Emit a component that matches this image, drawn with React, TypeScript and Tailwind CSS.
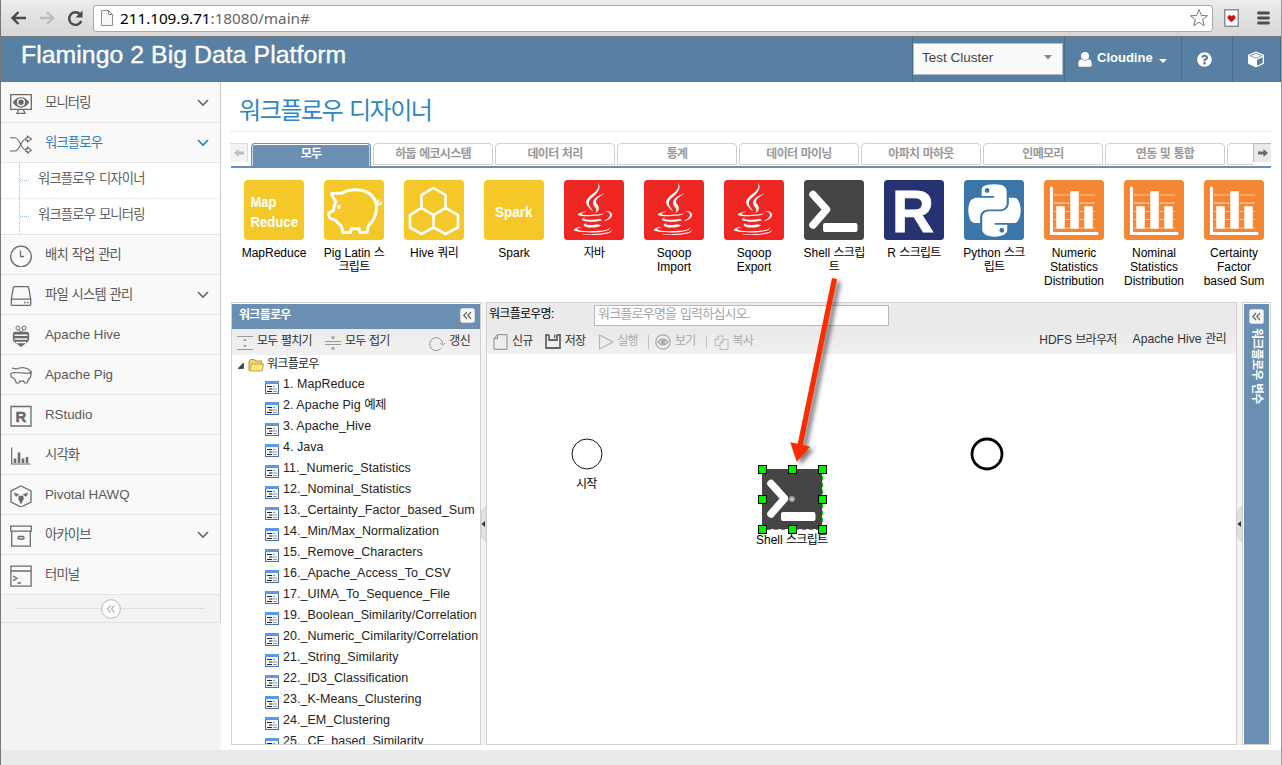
import React from "react";
import { FaJava, FaPython, FaQuestionCircle } from "react-icons/fa";

const HANGUL = /([\u3131-\uD79D]+)/;

function T({ children }: { children: string }) {
  return (
    <>
      {children.split(HANGUL).map((part, i) =>
        HANGUL.test(part) ? (
          <span key={i} className="tracking-[-0.06em]">
            {part}
          </span>
        ) : (
          <React.Fragment key={i}>{part}</React.Fragment>
        )
      )}
    </>
  );
}

/* ---------- Browser chrome ---------- */

function BrowserBar() {
  return (
    <div className="flex h-[37px] shrink-0 items-center border-b border-[#7d7d7d] bg-gradient-to-b from-[#ececec] to-[#d6d6d6] pl-[9px] pr-[11px]">
      <svg width="75" height="20" viewBox="0 0 75 20" fill="none" strokeWidth="2.4">
        <path d="M16 10H3M8.5 4L2.5 10l6 6" stroke="#4a4a4a" />
        <path d="M30 10h13M37 4l6 6-6 6" stroke="#bdbdbd" />
        <path d="M70 6.2A6.3 6.3 0 1 0 71.3 13" stroke="#4a4a4a" />
        <path d="M72.5 2.5v7h-7z" fill="#4a4a4a" />
      </svg>
      <div className="ml-[8px] flex h-[27px] flex-1 items-center rounded-[3px] border border-[#a9a9a9] bg-white pl-[7px] pr-[3px]">
        <svg width="12" height="16" viewBox="0 0 12 16" fill="#f6f6f6" stroke="#8c8c8c">
          <path d="M.5.5h7l4 4v11H.5zM7.5.5v4h4" />
        </svg>
        <div className="ml-[7px] flex-1 font-['Noto_Sans'] text-[15.3px] leading-5 tracking-[-0.04px] text-[#666]">
          <span className="text-black">211.109.9.71</span>:18080/main#
        </div>
        <svg width="20" height="20" viewBox="0 0 20 20" fill="#fff" stroke="#7a7a7a" strokeLinejoin="round">
          <path d="M10 1.5l2.3 6 6.2.2-4.9 3.9 1.7 6.2L10 14.3l-5.3 3.5 1.7-6.2L1.500 7.700l6.200-.2z" />
        </svg>
      </div>
      <svg className="ml-[11px]" width="15" height="18" viewBox="0 0 15 18">
        <rect x=".75" y=".75" width="13.500" height="16.500" fill="#fff" stroke="#8f8f8f" strokeWidth="1.5" />
        <path d="M7.500 13.200C5 11 3.500 9.800 3.500 8.200c0-2.200 3-2.700 4-.8 1-1.900 4-1.400 4 .8 0 1.600-1.500 2.800-4 5z" fill="#c21a10" />
      </svg>
      <svg className="ml-[18px]" width="13" height="14" viewBox="0 0 13 14" stroke="#4c4c4c" strokeWidth="2.800" strokeLinecap="round">
        <path d="M1.500 2h10M1.500 7h10M1.500 12h10" />
      </svg>
    </div>
  );
}

/* ---------- Application header ---------- */

function Header() {
  return (
    <header className="flex h-[45px] shrink-0 bg-[#5880a3] pl-5 text-white">
      <h1 className="mt-[2px] flex-1 text-[24.800px] leading-8 tracking-[0.05px] [-webkit-text-stroke:0.35px_white]">
        Flamingo 2 Big Data Platform
      </h1>
      <div className="flex">
        <div className="w-[152px] border-l border-[#446c8d] pt-[6px]">
          <div className="flex h-8 w-[150px] items-start justify-between border border-[#b5b8c8] bg-[#fafafa] pl-2 pr-2.5 text-[13.500px] leading-[27px] text-[#444]">
            Test Cluster
            <svg className="mt-[11px]" width="8" height="5" viewBox="0 0 8 5">
              <path d="M0 0h8L4 4.500z" fill="#8a8a8a" />
            </svg>
          </div>
        </div>
        <div className="flex w-[117px] items-center border-l border-[#446c8d] pl-[13px]">
          <svg width="14" height="15" viewBox="0 0 14 15" fill="#fff">
            <circle cx="7" cy="4" r="4" />
            <path d="M3.200 7.200C.8 8 .2 10 .2 12.500.2 14 1 14.800 2.500 14.800h9c1.500 0 2.300-.8 2.300-2.300 0-2.500-.6-4.500-3-5.300-2 1.800-5.600 1.800-7.600 0z" />
          </svg>
          <b className="ml-[5px] -mt-[3px] text-[13px] leading-5">Cloudine</b>
          <svg className="ml-1.5 mt-0.5" width="8" height="4" viewBox="0 0 8 4">
            <path d="M0 0h8L4 4z" fill="#fff" />
          </svg>
        </div>
        <div className="flex w-[51px] items-center justify-center border-l border-[#446c8d] pr-1.5">
          <FaQuestionCircle size={15} />
        </div>
        <div className="flex w-[49px] items-center justify-center border-x border-[#446c8d] pr-0.5">
          <svg width="18" height="17" viewBox="0 0 18 17">
            <path d="M9 .5l8 3.200v9L9 16.500l-8-3.800v-9z" fill="#fff" />
            <path d="M2.300 4.800L9 7.500l6.700-2.700L9 2z" fill="#5880a3" />
            <path d="M4 4.700l5 2 5-2-5-2z" fill="#fff" />
            <path d="M10 8.700l5.700-2.500v5.700L10 14.700z" fill="#5880a3" />
          </svg>
        </div>
      </div>
    </header>
  );
}

/* ---------- Sidebar ---------- */

const sideIcons: Record<string, React.ReactNode> = {
  monitor: (
    <>
      <path d="M.7 1.700h20.600v14.600H.7zM8.500 17l-1.500 3.300h8L13.500 17" />
      <path d="M3.500 9.500c4-6 11-6 15 0-4 6-11 6-15 0z" fill="#6b6b6b" />
      <circle cx="11" cy="9.300" r="3.400" stroke="#fff" fill="#6b6b6b" />
    </>
  ),
  flow: (
    <path d="M0 4.800h5c5 0 6 12.400 11 12.400M0 18h5c5 0 6-12 11-12M16 4.700h1.500V3l4 3-4 3V7.300H16zM16 15.900h1.500v-1.700l4 3-4 3v-1.700H16z" strokeWidth="1.100" />
  ),
  clock: (
    <>
      <circle cx="11" cy="11.500" r="10.300" />
      <path d="M10.500 5.500v6h3.500" />
    </>
  ),
  disk: (
    <>
      <path d="M4.500 1.700h13q1 0 1.200 1l2 11.500v5q0 1.200-1.200 1.200h-17q-1.200 0-1.200-1.200v-5l2-11.500q.2-1 1.200-1zM1.500 14.200h19" />
      <path d="M14 17.500h1.500M17 17.500h1.500" />
    </>
  ),
  bee: (
    <>
      <circle cx="8" cy="3" r="2" strokeWidth="1" />
      <circle cx="14" cy="3" r="2" strokeWidth="1" />
      <path d="M9 5l2 2.500L13 5" strokeWidth="1" />
      <path d="M5.500 7.500h11q2 0 2 2v4.500q0 2-2 3L11 21.200 5.500 17Q3.500 16 3.500 14V9.500q0-2 2-2z" fill="#6b6b6b" />
      <path d="M4.500 10.200h13M4.500 14h13M6 17.500h10" stroke="#f8f8f8" strokeWidth="1.500" />
    </>
  ),
  pig: (
    <path d="M2 3l4.500 1c4-1.800 8-2 11.500 0 1.800 1.200 2.700 2.700 3 4.300l.7-2M21 8.300c.3 3-1.300 5.500-3 6.700l-1 3h-2.500l-.8-1.800h-4L9 18H6.300l-1-3C4 14 3.500 12.300 1.200 11.800L.7 9 3 7.500z" strokeWidth="1.200" />
  ),
  r: (
    <>
      <path d="M1 1.500h20v19.500H1z" />
      <text x="5.500" y="16.500" fontSize="15" fontWeight="bold" fill="#6b6b6b" stroke="#6b6b6b" strokeWidth=".5">
        R
      </text>
    </>
  ),
  chart: (
    <>
      <path d="M1.700 2.500V19h18.800" strokeWidth="1.200" />
      <path d="M5 18v-4.500M9 18V7.500M13 18v-4.500M17 18v-6" strokeWidth="2.600" />
    </>
  ),
  hawk: (
    <>
      <path d="M11 1l10 5v11l-10 5-10-5V6z" />
      <path d="M4 8l5 1.500-3 2zM18 8l-5 1.500 3 2zM9 11h4l.5 3L11 19l-2.500-5z" fill="#6b6b6b" strokeWidth=".5" />
    </>
  ),
  archive: (
    <>
      <path d="M.7 1.200h20.600v5H.7zM1.700 6.200h18.600v15H1.700z" />
      <rect x="8" y="11.500" width="6" height="2.500" rx="1" />
    </>
  ),
  terminal: <path d="M.9 1.200h20.200v20H.9zM.9 6h20.200M3 11l4 2.300-4 2.300M7.500 18h3.500" />,
};

function Chevron({ blue }: { blue?: boolean }) {
  return (
    <svg width="12" height="8" viewBox="0 0 12 8" fill="none" stroke={blue ? "#2b7dbc" : "#666"} strokeWidth="1.600">
      <path d="M1 1l5 5 5-5" />
    </svg>
  );
}

function SideRow({ icon, label, arrow, active }: { icon: string; label: string; arrow?: boolean; active?: boolean }) {
  return (
    <div className="flex h-10 items-center border-b border-[#e5e5e5] bg-[#f9f9f9] pl-[9px] pr-[11px]">
      <svg className="mt-0.5 shrink-0" width="22" height="22" viewBox="0 0 22 22" fill="none" stroke="#6b6b6b" strokeWidth="1.300">
        {sideIcons[icon]}
      </svg>
      <span className={active ? "mt-px ml-[13px] flex-1 text-[13.300px] text-[#2b7dbc]" : "mt-px ml-[13px] flex-1 text-[13.300px] text-[#585858]"}>
        <T>{label}</T>
      </span>
      {arrow && <Chevron blue={active} />}
    </div>
  );
}

function SubRow({ label, last }: { label: string; last?: boolean }) {
  return (
    <div className={last ? "flex h-9 items-stretch border-b border-[#e5e5e5] bg-white" : "flex h-9 items-stretch border-b border-dotted border-[#dcdcdc] bg-white"}>
      <div className="ml-[18px] flex w-2.5 items-center border-l border-dotted border-[#9dbdd6]">
        <div className="w-full border-t border-dotted border-[#9dbdd6]" />
      </div>
      <span className="ml-[9px] text-[13.300px] leading-[31px] text-[#616161]">
        <T>{label}</T>
      </span>
    </div>
  );
}

function Sidebar() {
  return (
    <aside className="w-[220px] shrink-0 bg-[#f3f3f3]">
      <div className="border-r border-[#ccc]">
        <div className="pt-px">
          <SideRow icon="monitor" label="모니터링" arrow />
        </div>
        <SideRow icon="flow" label="워크플로우" arrow active />
        <SubRow label="워크플로우 디자이너" />
        <SubRow label="워크플로우 모니터링" last />
        <SideRow icon="clock" label="배치 작업 관리" />
        <SideRow icon="disk" label="파일 시스템 관리" arrow />
        <SideRow icon="bee" label="Apache Hive" />
        <SideRow icon="pig" label="Apache Pig" />
        <SideRow icon="r" label="RStudio" />
        <SideRow icon="chart" label="시각화" />
        <SideRow icon="hawk" label="Pivotal HAWQ" />
        <SideRow icon="archive" label="아카이브" arrow />
        <SideRow icon="terminal" label="터미널" />
        <div className="flex h-7 items-center border-b border-[#e0e0e0] px-[15px]">
          <div className="h-px flex-1 bg-[#e0e0e0]" />
          <svg width="20" height="20" viewBox="0 0 20 20" fill="#fff" stroke="#b5b5b5">
            <circle cx="10" cy="10" r="9.300" />
            <path d="M9.500 6.500L6.500 10l3 3.500M13.500 6.500l-3 3.500 3 3.500" fill="none" strokeWidth="1.200" />
          </svg>
          <div className="h-px flex-1 bg-[#e0e0e0]" />
        </div>
      </div>
    </aside>
  );
}

/* ---------- Tabs ---------- */

const tabs = ["모두", "하둡 에코시스템", "데이터 처리", "통계", "데이터 마이닝", "아파치 마하웃", "인메모리", "연동 및 통합"];

function Tabs() {
  return (
    <div className="flex h-[25px] border-b-2 border-[#6a8fb3]">
      <div className="-ml-px flex h-[19px] w-[18px] items-center justify-center border-r border-t border-[#ddd] bg-[#f4f4f4]">
        <svg width="10" height="8" viewBox="0 0 10 8" fill="#bcbcbc">
          <path d="M0 4l4.500-4v2.500H10v3H4.500V8z" />
        </svg>
      </div>
      <div className="flex flex-1 gap-0.5 overflow-hidden pl-[3px]">
        {tabs.map((t, i) => (
          <div
            key={t}
            className={
              i === 0
                ? "h-[23px] w-[120px] shrink-0 rounded-t border border-b-0 border-[#6a8fb3] bg-[#6a8fb3] text-center text-[12px] font-bold leading-[20px] text-white shadow-[inset_0_1px_0_#fff,inset_1px_0_0_#c8d6e4,inset_-1px_0_0_#c8d6e4]"
                : "h-[22px] w-[120px] shrink-0 rounded-t border border-[#cfcfcf] bg-white text-center text-[12px] font-bold leading-[20px] text-[#999]"
            }
          >
            <T>{t}</T>
          </div>
        ))}
        <div className="h-[22px] w-[30px] shrink-0 rounded-tl border border-[#cfcfcf] bg-white" />
      </div>
      <div className="flex h-[19px] w-[18px] items-center justify-center border-l border-t border-[#bbb] bg-[#eaeaea]">
        <svg width="10" height="8" viewBox="0 0 10 8" fill="#6c6c6c">
          <path d="M10 4L5.500 0v2.500H0v3h5.500V8z" />
        </svg>
      </div>
    </div>
  );
}

/* ---------- Palette ---------- */

function ShellGlyph() {
  return (
    <g stroke="#fff" fill="none" strokeLinecap="round" strokeLinejoin="round">
      <path d="M9 14.500L22.500 29.500 9 45" strokeWidth="7.500" />
      <rect x="21" y="45" width="30.500" height="5" strokeWidth="4" fill="#fff" />
    </g>
  );
}

function BarsGlyph() {
  return (
    <g>
      <path d="M10 15h41M10 23.200h41M10 31.500h41M10 39.500h41M10 48h41" stroke="#fbc79d" strokeWidth="1.200" />
      <path d="M7.500 8v45.500H53" stroke="#fff" strokeWidth="3.200" fill="none" strokeLinecap="round" strokeLinejoin="round" />
      <path d="M12 26h9v23h-9zM26 11h9v38h-9zM40 26h9v23h-9z" fill="#fff" stroke="#f58634" strokeWidth=".5" />
    </g>
  );
}

function HiveGlyph() {
  return (
    <path
      d="M29.500 8l12 7v13l-12 7-12-7V15zM17.500 28l12 7v12.500l-12 6.500L6 47.500V35zM41.500 28L54 35v12.500L41.500 54l-12-6.500V35z"
      fill="none"
      stroke="#fff"
      strokeWidth="2.600"
    />
  );
}

function PigGlyph() {
  return (
    <g fill="none" stroke="#fff" strokeWidth="3" strokeLinejoin="round" strokeLinecap="round">
      <path d="M7.500 13.500L18 13c6-3.500 17-4.500 23.500-1.500C48 14 52.500 20 52.500 27c0 8-3.500 14.500-8 18.500l-1.500 7h-7l-.8-3.700h-7.700l-1.200 3.700h-7.500L17.500 46C14 44 13 40.500 9.500 39.500 5.500 39 4 36 5 33l4.500-2.500c0-4 1.500-6.500 2.500-9C10.500 19 8 17 7.500 13.500z" />
      <path d="M52.500 23.500c2.500 1.500 4.500 1 4.800-1M54.500 24.500c-2-2-1-4 .2-4" strokeWidth="1.800" />
      <circle cx="15" cy="27" r=".7" strokeWidth="2.500" />
    </g>
  );
}

function tileText(lines: [string, number, number, number][]) {
  return (
    <g fill="#fff" fontWeight="bold" fontSize="15.500">
      {lines.map(([s, x, y, w]) => (
        <text key={s} x={x} y={y} textLength={w} lengthAdjust="spacingAndGlyphs">
          {s}
        </text>
      ))}
    </g>
  );
}

const yellow = "text-[#f4c829]";
const red = "text-[#ee2624]";
const orange = "text-[#f58634]";

const javaGlyph = <FaJava x={3} y={3} size={52} color="#fff" />;

const palette: { tint: string; glyph: React.ReactNode; lines: string[] }[] = [
  { tint: yellow, glyph: tileText([["Map", 6.500, 26.500, 26], ["Reduce", 6.500, 47, 47.500]]), lines: ["MapReduce"] },
  { tint: yellow, glyph: <PigGlyph />, lines: ["Pig Latin 스", "크립트"] },
  { tint: yellow, glyph: <HiveGlyph />, lines: ["Hive 쿼리"] },
  { tint: yellow, glyph: tileText([["Spark", 11, 36.500, 37.500]]), lines: ["Spark"] },
  { tint: red, glyph: javaGlyph, lines: ["자바"] },
  { tint: red, glyph: javaGlyph, lines: ["Sqoop", "Import"] },
  { tint: red, glyph: javaGlyph, lines: ["Sqoop", "Export"] },
  { tint: "text-[#454545]", glyph: <ShellGlyph />, lines: ["Shell 스크립", "트"] },
  {
    tint: "text-[#263272]",
    glyph: (
      <text x="8" y="52" fontSize="60" fontWeight="bold" fill="#fff" stroke="#fff" textLength="42" lengthAdjust="spacingAndGlyphs">
        R
      </text>
    ),
    lines: ["R 스크립트"],
  },
  { tint: "text-[#3a76a8]", glyph: <FaPython x={0.5} y={0.5} size={60} color="#fff" />, lines: ["Python 스크", "립트"] },
  { tint: orange, glyph: <BarsGlyph />, lines: ["Numeric", "Statistics", "Distribution"] },
  { tint: orange, glyph: <BarsGlyph />, lines: ["Nominal", "Statistics", "Distribution"] },
  { tint: orange, glyph: <BarsGlyph />, lines: ["Certainty", "Factor", "based Sum"] },
];

function Palette() {
  return (
    <div className="flex h-[134px] pl-[3px] pt-3">
      {palette.map((p, i) => (
        <div key={i} className="flex w-20 shrink-0 flex-col items-center">
          <svg width="60" height="60" viewBox="0 0 60 60" className={p.tint}>
            <rect width="60" height="60" rx="3.500" fill="currentColor" />
            {p.glyph}
          </svg>
          <div className="mt-1.5 whitespace-nowrap text-center text-[12px] leading-[14px] text-black">
            {p.lines.map((l) => (
              <div key={l} className="h-3.5">
                <T>{l}</T>
              </div>
            ))}
          </div>
        </div>
      ))}
    </div>
  );
}

/* ---------- Workflow tree ---------- */

const workflows = [
  "1. MapReduce",
  "2. Apache Pig 예제",
  "3. Apache_Hive",
  "4. Java",
  "11._Numeric_Statistics",
  "12._Nominal_Statistics",
  "13._Certainty_Factor_based_Sum",
  "14._Min/Max_Normalization",
  "15._Remove_Characters",
  "16._Apache_Access_To_CSV",
  "17._UIMA_To_Sequence_File",
  "19._Boolean_Similarity/Correlation",
  "20._Numeric_Cimilarity/Correlation",
  "21._String_Similarity",
  "22._ID3_Classification",
  "23._K-Means_Clustering",
  "24._EM_Clustering",
  "25._CF_based_Similarity",
];

function CollapseButton() {
  return (
    <svg className="shrink-0" width="15" height="15" viewBox="0 0 15 15">
      <rect x=".5" y=".5" width="14" height="14" rx="2" fill="#f7f7f7" stroke="#d8d8d8" />
      <path d="M7 4L3.800 7.500 7 11M11 4L7.800 7.500 11 11" fill="none" stroke="#666" strokeWidth="1.200" />
    </svg>
  );
}

function TreePanel() {
  return (
    <div className="flex w-[250px] shrink-0 flex-col border border-[#d0d0d0] bg-white">
      <div className="mt-px flex h-[25px] shrink-0 items-center justify-between bg-[#6a8fb3] pl-[7px] pr-[5px] text-white">
        <b className="-mt-[3px] text-[12px]">
          <T>워크플로우</T>
        </b>
        <span className="-mt-0.5">
          <CollapseButton />
        </span>
      </div>
      <div className="flex h-[26px] shrink-0 items-center bg-gradient-to-b from-[#ebebeb] to-[#f1f1f1] pl-[5px] pr-2.5 text-[12px] text-[#333]">
        <svg className="mt-0.5" width="16" height="14" viewBox="0 0 16 14" fill="none" stroke="#999">
          <path d="M0 .5h16M0 13.500h16" />
          <path d="M8 2.500l2 2.500H6zM8 11.500L6 9h4z" fill="#999" stroke="none" />
        </svg>
        <span className="-mt-0.5 ml-1">
          <T>모두 펼치기</T>
        </span>
        <svg className="ml-[13px] mt-0.5" width="16" height="14" viewBox="0 0 16 14" fill="none" stroke="#999">
          <path d="M0 5.500h16M0 8.500h16" />
          <path d="M8 4L6 .500h4zM8 10l2 3.500H6z" fill="#999" stroke="none" />
        </svg>
        <span className="-mt-0.5 ml-1 flex-1">
          <T>모두 접기</T>
        </span>
        <svg className="mt-0.5" width="17" height="15" viewBox="0 0 17 15" fill="none" stroke="#999">
          <path d="M12.200 12.300A6.500 6.500 0 1 1 13.700 8M11.200 7l2.500 2.800L16.200 7" />
        </svg>
        <span className="-mt-0.5 ml-[3px]">
          <T>갱신</T>
        </span>
      </div>
      <div className="min-h-0 flex-1 overflow-hidden whitespace-nowrap text-[12.500px] leading-[18px] text-[#222]">
        <div className="flex h-[21px]">
          <svg className="ml-1.5 mt-2" width="6" height="6" viewBox="0 0 6 6">
            <path d="M5.500 0v5.500H0z" fill="#444" stroke="#222" strokeWidth=".6" />
          </svg>
          <svg className="ml-1 mt-[3px]" width="16" height="14" viewBox="0 0 16 14" strokeLinejoin="round">
            <path d="M1 12.500V3l1.500-1.500h4L8 3h5.500v9.500z" fill="#f2d26a" stroke="#b8942f" />
            <path d="M1.500 13L3.500 6h12l-1.500 7z" fill="#ffe680" stroke="#c9a23a" />
          </svg>
          <span className="ml-[3px] text-[12px]">
            <T>워크플로우</T>
          </span>
        </div>
        {workflows.map((w) => (
          <div key={w} className="flex h-[21px] pl-[33px]">
            <svg className="mt-[5px] shrink-0" width="14" height="13" viewBox="0 0 14 13">
              <rect x=".5" y=".5" width="13" height="12" fill="#f4f8ff" stroke="#4a6fa8" />
              <path d="M0 0h14v3H0z" fill="#5b97ea" />
              <path d="M2 5.500h5M4 8h3M2 10.500h5" stroke="#222" />
              <path d="M8 5.500h2M7 8h5M8 10.500h4" stroke="#999" />
            </svg>
            <span className="-mt-px ml-[4px] tracking-[0.04px]">
              <T>{w}</T>
            </span>
          </div>
        ))}
      </div>
    </div>
  );
}

function Splitter() {
  return (
    <div className="flex w-[5px] shrink-0 items-center bg-[#f3f3f3]">
      <svg width="5" height="36" viewBox="0 0 5 36">
        <path d="M5 0v36L0 31V5z" fill="#e2e2e2" stroke="#ccc" strokeWidth=".6" />
        <path d="M4 15v6l-3.500-3z" fill="#333" />
      </svg>
    </div>
  );
}

/* ---------- Designer ---------- */

const handles = [
  [0, 0], [30, 0], [60, 0],
  [0, 30], [60, 30],
  [0, 60], [30, 60], [60, 60],
];

function Canvas() {
  return (
    <div className="relative min-h-0 flex-1 overflow-hidden bg-white text-[12px] leading-[14px] text-black">
      <svg className="absolute left-[84px] top-[84px]" width="32" height="32" viewBox="0 0 32 32">
        <circle cx="16" cy="16" r="15" fill="#fff" stroke="#111" />
      </svg>
      <span className="absolute left-[89px] top-[123px] whitespace-nowrap">
        <T>시작</T>
      </span>
      <svg className="absolute left-[483px] top-[83px]" width="34" height="34" viewBox="0 0 34 34">
        <circle cx="17" cy="17" r="15" fill="#fff" stroke="#000" strokeWidth="2.800" />
      </svg>
      <svg className="absolute left-[270px] top-[110px]" width="70" height="70" viewBox="-5 -5 70 70">
        <rect width="60" height="60" fill="#454545" />
        <ShellGlyph />
        <circle cx="30" cy="30" r="3" fill="#999" />
        <circle cx="30" cy="30" r="1.500" fill="#ccc" />
        <path d="M60.500 0v60.500H0" fill="none" stroke="#0c0" strokeDasharray="4 3" />
        {handles.map(([x, y]) => (
          <rect key={`${x}-${y}`} x={x - 3.5} y={y - 3.5} width="8" height="8" fill="#00f000" stroke="#000" />
        ))}
      </svg>
      <span className="absolute left-[269px] top-[179px] whitespace-nowrap">
        <T>Shell 스크립트</T>
      </span>
    </div>
  );
}

function Designer() {
  return (
    <div className="flex min-w-0 flex-1 flex-col border border-[#d0d0d0] bg-white">
      <div className="flex h-[25px] shrink-0 items-start bg-[#ebebeb] pl-0.5 pt-[2px] text-[12px] text-black">
        <span className="w-[105px] leading-[19px]">
          <T>워크플로우명:</T>
        </span>
        <div className="h-[21px] w-[295px] border border-[#b5b8c8] bg-white pl-[3px] text-[13px] leading-[15px] text-[#a5a5a5]">
          <T>워크플로우명을 입력하십시오.</T>
        </div>
      </div>
      <div className="flex h-[26px] shrink-0 items-center bg-gradient-to-b from-[#e9e9e9] to-[#f1f1f1] pl-1.5 pr-2.5 text-[12px] text-[#333]">
        <svg className="mt-px" width="15" height="16" viewBox="0 0 15 16" fill="none" stroke="#8a8a8a">
          <path d="M4.500.7H14v14.600H1V4.500zM4.500.7v3.800H1" />
        </svg>
        <span className="-mt-px ml-1">
          <T>신규</T>
        </span>
        <svg className="ml-3 mt-px" width="16" height="15" viewBox="0 0 16 15" fill="none" stroke="#666" strokeWidth="1.800">
          <path d="M3.500 1H1v13h14V1h-2.500M4 .5v5.500h8V.5" />
          <path d="M9.700.5v3.500" strokeWidth="1.500" />
        </svg>
        <span className="-mt-px ml-1">
          <T>저장</T>
        </span>
        <svg className="ml-[13px] mt-0.5" width="16" height="16" viewBox="0 0 16 16" fill="none" stroke="#b5b5b5" strokeWidth="1.200">
          <path d="M1.500 1L15 8 1.500 15z" />
        </svg>
        <span className="-mt-px ml-[3px] text-[#aaa]">
          <T>실행</T>
        </span>
        <div className="ml-[10px] mt-0.5 h-3.5 w-px bg-[#c5c5b8]" />
        <svg className="ml-1.5 mt-0.5" width="16" height="16" viewBox="0 0 16 16" fill="none" stroke="#aaa" strokeWidth="1.300">
          <circle cx="8" cy="8" r="7.200" />
          <path d="M3 8c3-4 7-4 10 0-3 4-7 4-10 0z" />
          <circle cx="8" cy="8" r="1.800" fill="#aaa" />
        </svg>
        <span className="-mt-px ml-1 text-[#aaa]">
          <T>보기</T>
        </span>
        <div className="ml-[10px] mt-0.5 h-3.5 w-px bg-[#c5c5b8]" />
        <svg className="ml-[7px] mt-0.5" width="15" height="15" viewBox="0 0 15 15" fill="none" stroke="#bbb">
          <path d="M5 10.500H1v-6L4.500 1H9v3.500M4.500 1v3.500H1M9 4.500h5v10H6V8zM9 4.500V8H6" />
        </svg>
        <span className="-mt-px ml-1 flex-1 text-[#aaa]">
          <T>복사</T>
        </span>
        <span className="-mt-[3px] text-[12px]">
          <T>HDFS 브라우저</T>
        </span>
        <span className="-mt-[3px] ml-4 text-[12.200px]">
          <T>Apache Hive 관리</T>
        </span>
      </div>
      <Canvas />
    </div>
  );
}

function VariablesPanel() {
  return (
    <div className="w-[29px] shrink-0 border border-[#d0d0d0] p-px pb-0">
      <div className="flex h-full flex-col items-center bg-[#6a8fb3] pt-[5px] text-white">
        <CollapseButton />
        <b className="mt-1 text-[12px] leading-4 [writing-mode:vertical-rl] [text-orientation:sideways]">
          <T>워크플로우 변수</T>
        </b>
      </div>
    </div>
  );
}

function DragArrow() {
  return (
    <svg className="pointer-events-none absolute left-[779px] top-[270px] drop-shadow-[4px_3px_2px_rgba(0,0,0,0.5)]" width="70" height="205" viewBox="780 270 70 205">
      <path d="M832 278l5 1-34.200 166 7.200 1.700-13.300 15-6.400-19.400 7.400 1.400z" fill="#ff2a00" />
    </svg>
  );
}

export default function App() {
  return (
    <div className="relative flex h-[765px] w-[1282px] flex-col overflow-hidden border-l border-r border-l-[#777] border-r-[#999] bg-white font-['Liberation_Sans','Noto_Sans_CJK_KR',sans-serif]">
      <BrowserBar />
      <Header />
      <div className="flex h-[668px] shrink-0">
        <Sidebar />
        <main className="flex min-w-0 flex-1 flex-col pb-[5px] pl-2.5 pr-2.5">
          <div className="h-[50px] shrink-0 border-b border-dotted border-[#d8d8d8] pl-2 pt-[13px] text-[24px] font-normal leading-8 text-[#2f86c2]">
            <T>워크플로우 디자이너</T>
          </div>
          <div className="shrink-0 pt-[11px]">
            <Tabs />
          </div>
          <Palette />
          <div className="flex min-h-0 flex-1">
            <TreePanel />
            <Splitter />
            <Designer />
            <Splitter />
            <VariablesPanel />
          </div>
        </main>
      </div>
      <footer className="flex-1 bg-[#e9eaec]" />
      <DragArrow />
    </div>
  );
}
